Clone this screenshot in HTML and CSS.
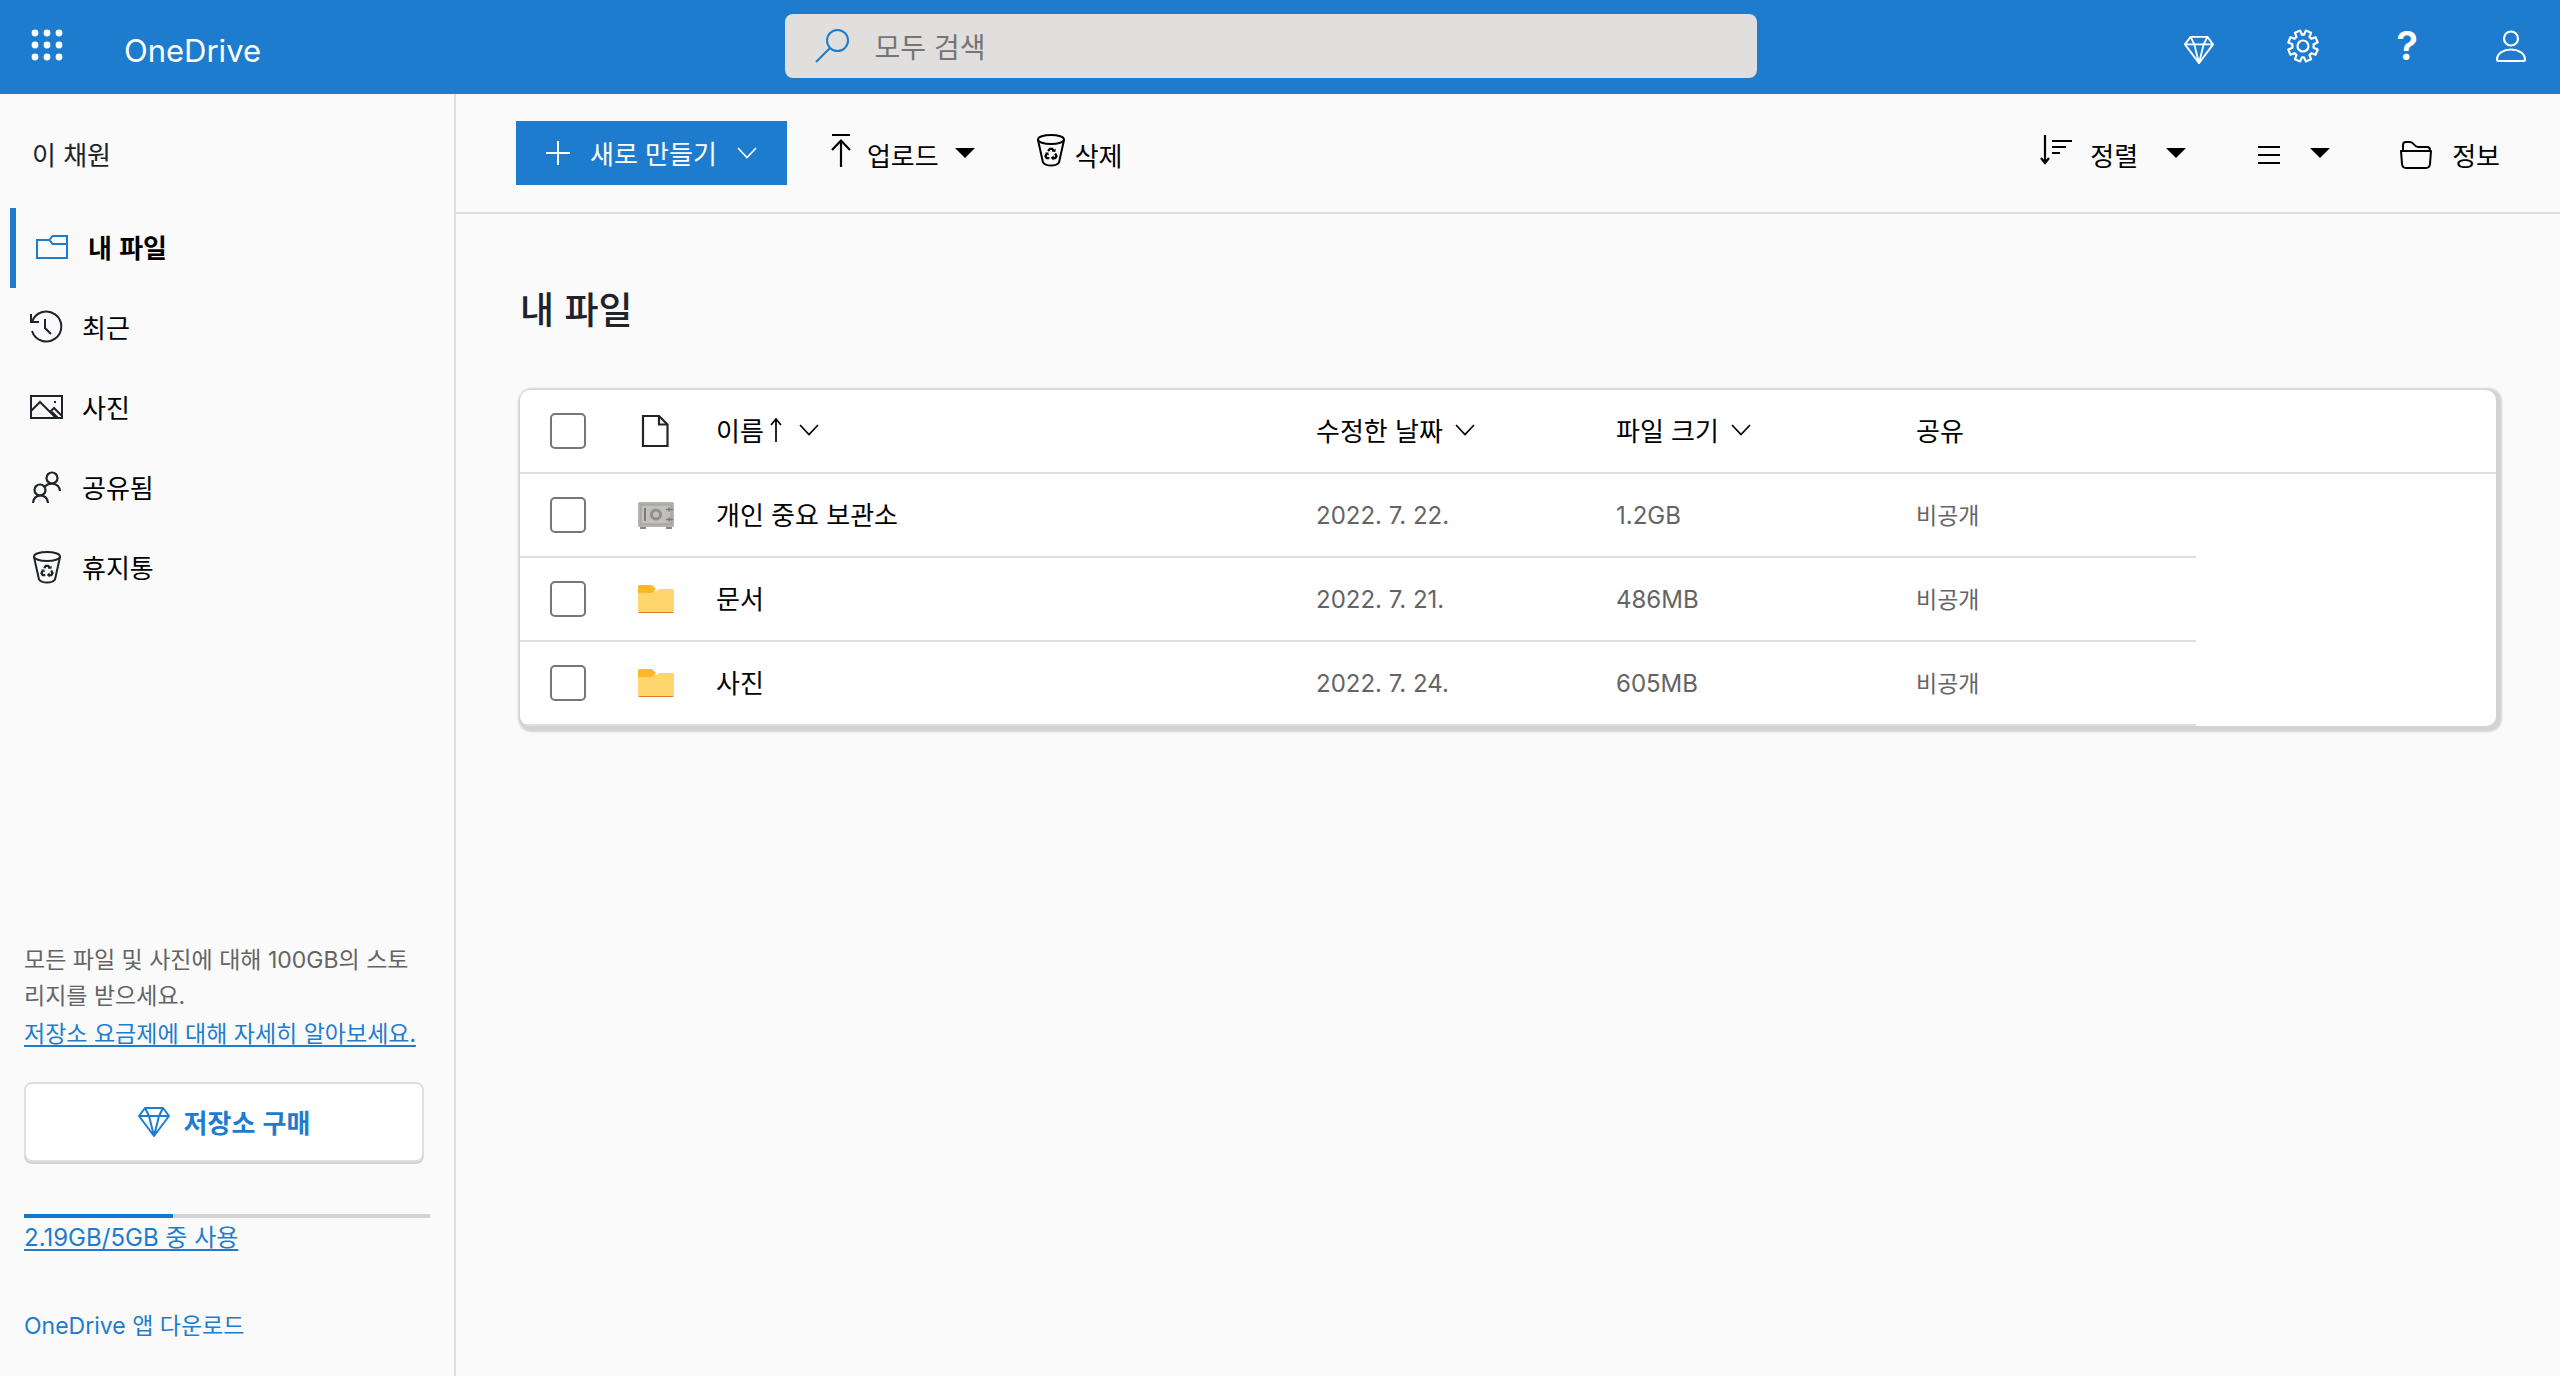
FILE: index.html
```html
<!DOCTYPE html>
<html lang="ko">
<head>
<meta charset="utf-8">
<meta name="viewport" content="width=device-width, initial-scale=1">
<title>내 파일 - OneDrive</title>
<link rel="stylesheet" href="styles.css">
</head>
<body>
<svg class="sprite" aria-hidden="true">
  <symbol id="trash" viewBox="0 0 32 34">
    <g fill="none" stroke="currentColor" stroke-width="2">
      <ellipse cx="16" cy="6.500" rx="13" ry="4.500"/>
      <path d="M3 7L8 29.500q2 3 8 3t8-3L29 7"/>
      <path d="M13.200 18.200l1.600-2.400h2.400l1.500 2.200M11.800 20.600l-1.300 2.600 1.200 1.900h2.600M20.200 20.600l1.300 2.600-1.200 1.900h-2.600" stroke-width="2.300"/>
    </g>
    <path d="M17 18.800h3.600v-3.400zM10 19.400l3.400.2.400 3zM18.600 22.200v5.400l-2.800-2.700z" fill="currentColor"/>
  </symbol>
  <symbol id="diamond" viewBox="0 0 32 32">
    <path d="M7 2h18l6 8-15 20L1 10zM1 10h30M7 2l4 8 5 20 5-20 4-8" fill="none" stroke="currentColor" stroke-width="2" stroke-linejoin="round"/>
  </symbol>
  <symbol id="chevron" viewBox="0 0 20 12">
    <path d="M1 1l9 9.500L19 1" fill="none" stroke="currentColor" stroke-width="1.700"/>
  </symbol>
  <symbol id="caret" viewBox="0 0 20 10"><path d="M0 0h20L10 10z" fill="currentColor"/></symbol>
  <symbol id="folder" viewBox="0 0 36 28">
    <path d="M0 6h18l3-2h13.500q1.500 0 1.500 1.500V26q0 2-2 2H2q-2 0-2-2z" fill="#ffd66e"/>
    <path d="M0 1.500Q0 0 1.500 0h11q1.500 0 2.500 1l3 3-3 3q-1 1-2.500 1H0z" fill="#ffb629"/>
    <path d="M0 27h36Q35.500 28 34 28H2Q.5 28 0 27z" fill="#e0762f"/>
  </symbol>
</svg>

<header class="topbar">
  <div class="brand">
    <button class="icon-button waffle" type="button" aria-label="앱 시작 관리자">
      <svg width="32" height="32" viewBox="0 0 32 32" fill="currentColor"><circle cx="4" cy="4" r="3.400"/><circle cx="16" cy="4" r="3.400"/><circle cx="28" cy="4" r="3.400"/><circle cx="4" cy="16" r="3.400"/><circle cx="16" cy="16" r="3.400"/><circle cx="28" cy="16" r="3.400"/><circle cx="4" cy="28" r="3.400"/><circle cx="16" cy="28" r="3.400"/><circle cx="28" cy="28" r="3.400"/></svg>
    </button>
    <a class="logo" href="#">OneDrive</a>
  </div>
  <label class="search">
    <svg width="34" height="34" viewBox="0 0 34 34" fill="none" stroke="currentColor" stroke-width="2"><circle cx="22.500" cy="11.500" r="10.500"/><path d="M15 19L1 33"/></svg>
    <input class="search-input" type="search" placeholder="모두 검색" aria-label="모두 검색">
  </label>
  <div class="actions">
    <button class="icon-button premium" type="button" aria-label="프리미엄"><svg width="30" height="30"><use href="#diamond"/></svg></button>
    <button class="icon-button" type="button" aria-label="설정">
      <svg width="34" height="34" viewBox="0 0 34 34" fill="none" stroke="currentColor" stroke-width="2.200" stroke-linejoin="round"><circle cx="17" cy="17" r="5.500"/><path d="M14.200 1.600L16 5.700h2l1.800-4.100 5.300 2.200-1.600 4.100 1.900 1.900 4.100-1.600 2.200 5.300-4.100 1.800v3.400l4.100 1.800-2.200 5.300-4.100-1.600-1.900 1.900 1.600 4.100-5.300 2.200L18 28.300h-2l-1.800 4.100-5.300-2.200 1.600-4.100-1.900-1.900-4.100 1.600-2.200-5.300 4.100-1.800v-3.400l-4.100-1.800 2.200-5.300 4.100 1.600 1.900-1.900-1.600-4.100z"/></svg>
    </button>
    <button class="icon-button help" type="button" aria-label="도움말">?</button>
    <button class="icon-button" type="button" aria-label="계정">
      <svg width="32" height="32" viewBox="0 0 32 32" fill="none" stroke="currentColor" stroke-width="2.200"><circle cx="16" cy="8.500" r="7"/><path d="M3.500 31Q2 31 2 29.500C2 23 9 19.500 16 19.500S30 23 30 29.500q0 1.500-1.500 1.500z"/></svg>
    </button>
  </div>
</header>

<div class="shell">
  <aside class="sidebar">
    <p class="owner">이 채원</p>
    <nav class="nav">
      <a class="nav-item active" href="#">
        <svg width="32" height="26" viewBox="0 0 32 26" fill="none" stroke="currentColor" stroke-width="2"><path d="M13.500 6H1v18h30V2H16.500l-3 4 3 4H31"/></svg>
        내 파일</a>
      <a class="nav-item" href="#">
        <svg width="34" height="34" viewBox="0 0 34 34" fill="none" stroke="currentColor" stroke-width="2"><path d="M2 21a15 15 0 1 0 0-9M1 4v8h8M15 9v9l6 6"/></svg>
        최근</a>
      <a class="nav-item" href="#">
        <svg width="34" height="26" viewBox="0 0 34 26" fill="none" stroke="currentColor" stroke-width="2"><path d="M1 2h31v22H1zM1 17l9-9 16 16M20 18l4-4 8 8M22 18l6 6"/><path d="M24 8h2"/></svg>
        사진</a>
      <a class="nav-item" href="#">
        <svg width="34" height="32" viewBox="0 0 34 32" fill="none" stroke="currentColor" stroke-width="2.200"><circle cx="22" cy="7" r="5.500"/><circle cx="10" cy="19" r="5.500"/><path d="M3 32c0-10 15-10 15 0M15 16c3-5 14-5 15 4"/></svg>
        공유됨</a>
      <a class="nav-item" href="#"><svg width="34" height="34"><use href="#trash"/></svg>휴지통</a>
    </nav>
    <div class="storage">
      <p class="storage-text">모든 파일 및 사진에 대해 100GB의 스토리지를 받으세요.</p>
      <a class="text-link plans" href="#">저장소 요금제에 대해 자세히 알아보세요.</a>
      <button class="buy" type="button"><svg width="32" height="32"><use href="#diamond"/></svg>저장소 구매</button>
      <div class="meter" role="progressbar" aria-label="사용한 저장소" aria-valuemin="0" aria-valuemax="5" aria-valuenow="2.19"><div class="meter-fill" style="width:36.700%"></div></div>
      <a class="text-link usage" href="#">2.19GB/5GB 중 사용</a>
      <a class="text-link download" href="#">OneDrive 앱 다운로드</a>
    </div>
  </aside>

  <main class="main">
    <div class="toolbar">
      <button class="create" type="button">
        <svg width="24" height="24" viewBox="0 0 24 24" fill="none" stroke="currentColor" stroke-width="2"><path d="M12 0v24M0 12h24"/></svg>
        새로 만들기
        <svg width="20" height="12"><use href="#chevron"/></svg>
      </button>
      <button class="tool upload" type="button">
        <svg class="raised" width="20" height="34" viewBox="0 0 20 34" fill="none" stroke="currentColor" stroke-width="2.200"><path d="M1 2h18M10 34V8M1 17l9-9.500 9 9.500"/></svg>
        업로드
        <svg class="caret" width="20" height="10"><use href="#caret"/></svg>
      </button>
      <button class="tool delete" type="button"><svg class="raised" width="32" height="34"><use href="#trash"/></svg>삭제</button>
      <div class="view-tools">
        <button class="tool sort" type="button">
          <svg class="raised" width="32" height="30" viewBox="0 0 32 30" fill="none" stroke="currentColor" stroke-width="2.200"><path d="M5 0v28M1 23l4 5 4-5M12 6h20M12 12h14M12 18h8"/></svg>
          정렬
          <svg class="caret" width="20" height="10"><use href="#caret"/></svg>
        </button>
        <button class="tool view" type="button" aria-label="보기">
          <svg width="22" height="20" viewBox="0 0 22 20" stroke="currentColor" stroke-width="2"><path d="M0 2h22M0 10h22M0 18h22"/></svg>
          <svg class="caret" width="20" height="10"><use href="#caret"/></svg>
        </button>
        <button class="tool info" type="button">
          <svg width="32" height="28" viewBox="0 0 32 28" fill="none" stroke="currentColor" stroke-width="2" stroke-linejoin="round"><path d="M1 10h30l-1 13q-.5 4-4 4H6q-3.500 0-4-4zM3 10V4q0-3 3-3h4q2 0 4 2.500T18 6h9q3 0 3 3v1"/></svg>
          정보
        </button>
      </div>
    </div>

    <section class="content">
      <h1 class="title">내 파일</h1>
      <div class="card">
        <table class="files">
          <colgroup><col class="col-check"><col class="col-icon"><col class="col-name"><col class="col-data"><col class="col-data"><col class="col-data"><col></colgroup>
          <thead>
            <tr>
              <th class="check"><input class="box" type="checkbox" aria-label="모두 선택"></th>
              <th><svg class="cell-icon" width="36" height="34" viewBox="0 0 36 34" fill="none" stroke="#20242a" stroke-width="2.200"><path d="M5 2h16l8.500 8.500V32H5zM21 2v8.500h8.500"/></svg></th>
              <th class="label"><span class="heading">이름<svg class="arrow" width="12" height="24" viewBox="0 0 12 24" fill="none" stroke="currentColor" stroke-width="1.700"><path d="M6 24V1M1 7l5-6 5 6"/></svg><svg width="20" height="12"><use href="#chevron"/></svg></span></th>
              <th class="label"><span class="heading">수정한 날짜<svg class="near" width="20" height="12"><use href="#chevron"/></svg></span></th>
              <th class="label"><span class="heading">파일 크기<svg class="near" width="20" height="12"><use href="#chevron"/></svg></span></th>
              <th class="label">공유</th>
              <th></th>
            </tr>
          </thead>
          <tbody>
            <tr>
              <td class="check"><input class="box" type="checkbox" aria-label="개인 중요 보관소 선택"></td>
              <td><svg class="cell-icon" width="36" height="28" viewBox="0 0 36 28"><path d="M2 24h6v4H2zM28 24h6v4h-6z" fill="#8a8987"/><rect y="1" width="36" height="25" rx="1.500" fill="#b4b2af"/><rect x="3" y="4" width="30" height="19" fill="#c2c0bd" stroke="#9f9d9b"/><path d="M7 7v13" stroke="#7d7b79" stroke-width="2"/><circle cx="18" cy="13.500" r="4.500" fill="none" stroke="#92908e" stroke-width="3"/><path d="M28 8.500h7M28 18.500h7M31 6.500v4M31 16.500v4" stroke="#7d7b79" stroke-width="1.500"/></svg></td>
              <td class="label">개인 중요 보관소</td><td class="meta">2022. 7. 22.</td><td class="meta">1.2GB</td><td class="meta shared">비공개</td>
            </tr>
            <tr>
              <td class="check"><input class="box" type="checkbox" aria-label="문서 선택"></td>
              <td><svg class="cell-icon" width="36" height="28"><use href="#folder"/></svg></td>
              <td class="label">문서</td><td class="meta">2022. 7. 21.</td><td class="meta">486MB</td><td class="meta shared">비공개</td>
            </tr>
            <tr>
              <td class="check"><input class="box" type="checkbox" aria-label="사진 선택"></td>
              <td><svg class="cell-icon" width="36" height="28"><use href="#folder"/></svg></td>
              <td class="label">사진</td><td class="meta">2022. 7. 24.</td><td class="meta">605MB</td><td class="meta shared">비공개</td>
            </tr>
          </tbody>
        </table>
      </div>
    </section>
  </main>
</div>
</body>
</html>
```

FILE: styles.css
```css
:root {
  --blue: #1e7ccf;
  --line: #dedede;
  --ink: #20242a;
  --muted: #646464;
  --korean: "Noto Sans CJK KR", "Noto Sans", sans-serif;
  --mixed: Inter, "Noto Sans CJK KR", sans-serif;
}

* { box-sizing: border-box; }

body {
  margin: 0;
  min-height: 100vh;
  display: flex;
  flex-direction: column;
  background: #fafafa;
  color: #000;
  font-family: var(--korean);
  font-size: 26px;
  line-height: 36px;
}

button, input { font: inherit; color: inherit; }

button {
  padding: 0;
  border: 0;
  background: none;
  cursor: pointer;
}

p, h1 { margin: 0; }
a { color: inherit; text-decoration: none; }
svg { display: block; flex: none; }
.sprite { position: absolute; width: 0; height: 0; }

/* Top bar */
.topbar {
  display: flex;
  align-items: center;
  min-height: 94px;
  padding: 0 32px 2px 14px;
  background: var(--blue);
  color: #fff;
}

.brand {
  flex: 1;
  display: flex;
  align-items: center;
  gap: 60px;
}

.icon-button {
  width: 34px;
  display: flex;
  justify-content: center;
  align-items: center;
}

.waffle { margin-left: 16px; padding-bottom: 2px; }

.logo {
  padding-top: 10px;
  font-family: var(--mixed);
  font-size: 31px;
}

.search {
  flex: 0 0 38vw;
  display: flex;
  align-items: center;
  gap: 26px;
  height: 64px;
  padding: 0 30px;
  border-radius: 8px;
  background: #e0dfdd;
  color: var(--blue);
}

.search-input {
  flex: 1;
  min-width: 0;
  padding: 0;
  border: 0;
  outline: 0;
  background: none;
  color: #222;
  font-size: 28px;
}

.search-input::placeholder { color: #757575; opacity: 1; }

.actions {
  flex: 1;
  display: flex;
  justify-content: flex-end;
  align-items: center;
  gap: 70px;
}

.premium { padding-top: 8px; }

.help {
  font-family: var(--mixed);
  font-size: 40px;
  font-weight: 600;
}

/* Page frame */
.shell { flex: 1; display: flex; }

.sidebar {
  flex: none;
  width: 456px;
  display: flex;
  flex-direction: column;
  border-right: 2px solid var(--line);
}

.owner {
  padding: 42px 32px 36px;
  color: var(--ink);
}

.nav-item {
  display: flex;
  align-items: center;
  gap: 18px;
  height: 80px;
  padding-left: 30px;
  padding-bottom: 2px;
}

.nav-item svg { color: var(--ink); }

.nav-item.active {
  gap: 20px;
  margin-left: 10px;
  padding-left: 20px;
  border-left: 6px solid var(--blue);
  font-weight: 700;
}

.nav-item.active svg { color: var(--blue); }

.storage {
  display: flex;
  flex-direction: column;
  align-items: flex-start;
  margin-top: auto;
  padding: 0 24px 32px;
  font-size: 23px;
}

.storage-text {
  width: 400px;
  color: var(--muted);
  font-family: var(--mixed);
}

.text-link {
  color: var(--blue);
  font-family: var(--mixed);
  text-decoration: underline;
  text-decoration-thickness: 2px;
  text-underline-offset: 3px;
}

.plans { font-family: var(--korean); }
.usage { font-size: 24px; }

.buy {
  width: 400px;
  height: 80px;
  display: flex;
  justify-content: center;
  align-items: center;
  gap: 14px;
  margin: 32px 0 52px;
  border: 2px solid var(--line);
  border-radius: 8px;
  background: #fff;
  box-shadow: 0 2px 0 #d3d3d3;
  color: var(--blue);
  font-size: 26px;
  font-weight: 700;
}

.meter {
  width: 406px;
  height: 4px;
  margin-bottom: 2px;
  background: #d3d3d3;
}

.meter-fill { height: 100%; background: #1078d4; }

.download {
  margin-top: 52px;
  text-decoration: none;
}

/* Command bar */
.main { flex: 1; min-width: 0; }

.toolbar {
  display: flex;
  align-items: center;
  height: 120px;
  padding: 0 60px;
  border-bottom: 2px solid var(--line);
}

.create {
  display: flex;
  align-items: center;
  gap: 20px;
  height: 64px;
  padding: 0 30px;
  background: var(--blue);
  color: #fff;
}

.tool {
  display: flex;
  align-items: center;
  gap: 16px;
  padding-top: 4px;
}

.raised { margin-bottom: 10px; }
.caret { margin-bottom: 4px; }
.upload { margin-left: 44px; }
.delete { gap: 8px; margin-left: 60px; }

.view-tools {
  display: flex;
  align-items: center;
  gap: 70px;
  margin-left: auto;
}

.sort { gap: 18px; margin-right: 2px; }
.sort .caret { margin-left: 10px; }
.view { gap: 30px; }
.info { gap: 20px; }

/* File list */
.content { padding: 66px 64px; }

.title {
  color: var(--ink);
  font-size: 37px;
  font-weight: 500;
  line-height: 56px;
}

.card {
  margin-top: 54px;
  overflow: hidden;
  border-radius: 10px;
  background: #fff;
  box-shadow: 2px 2px 2px 4px #d3d3d3;
}

.files {
  width: 100%;
  table-layout: fixed;
  border-collapse: separate;
  border-spacing: 0;
}

.col-check { width: 96px; }
.col-icon { width: 80px; }
.col-name { width: 600px; }
.col-data { width: 300px; }

.files th, .files td {
  height: 84px;
  padding: 0 20px;
  border-bottom: 2px solid var(--line);
  font-weight: 400;
  text-align: left;
  vertical-align: middle;
}

.files .check { padding-left: 30px; }
.files .label { padding-bottom: 2px; }
.cell-icon { margin-left: 2px; }

.box {
  appearance: none;
  display: block;
  width: 36px;
  height: 36px;
  margin: 0;
  border: 2px solid #767676;
  border-radius: 5px;
  background: #fff;
}

.box:checked { background: var(--blue); }

.heading { display: flex; align-items: center; }
.arrow { margin: 0 17px 0 6px; }
.near { margin-left: 12px; }

.files .meta {
  padding-top: 2px;
  color: var(--muted);
  font-family: var(--mixed);
  font-size: 24px;
}

.files .shared { font-size: 23px; }
```
